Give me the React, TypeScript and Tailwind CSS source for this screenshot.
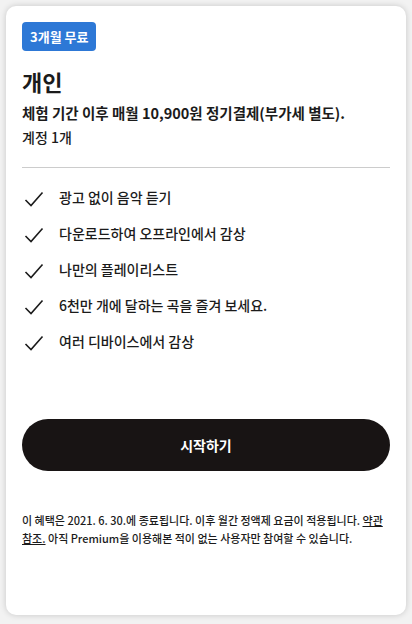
import React from "react";

const features = [
  "광고 없이 음악 듣기",
  "다운로드하여 오프라인에서 감상",
  "나만의 플레이리스트",
  "6천만 개에 달하는 곡을 즐겨 보세요.",
  "여러 디바이스에서 감상",
];

const Check: React.FC = () => (
  <svg width="20" height="21" viewBox="0 0 20 21" fill="none" className="shrink-0">
    <path d="M1.5 13 L7 18.5 L18.5 5.5" stroke="#1b1b1b" strokeWidth="1.6" />
  </svg>
);

const App: React.FC = () => {
  return (
    <div
      className="min-h-[624px] w-[412px] bg-[#f2f2f2] p-[6px] text-[#1b1b1b]"
      style={{ fontFamily: '"Noto Sans CJK KR", "Noto Sans", sans-serif' }}
    >
      <div className="flex h-[609px] flex-col rounded-[10px] bg-white px-4 pt-4 shadow-[0_0_6px_rgba(0,0,0,0.18)]">
        <div className="self-start rounded-[4px] bg-[#2d78d6] px-2 py-[5px] text-[13px] font-bold leading-[19px] text-white">
          3개월 무료
        </div>
        <h2 className="mt-[15px] text-[22px] font-bold leading-[30px]">개인</h2>
        <p className="mt-[6px] text-[14.5px] font-semibold leading-[22px]">
          체험 기간 이후 매월 10,900원 정기결제(부가세 별도).
        </p>
        <p className="mt-[2px] text-[14px] font-medium leading-[22px]">계정 1개</p>
        <div className="mt-[19px] h-px bg-[#cccccc]" />
        <ul className="mt-[19px] flex flex-col gap-[15px]">
          {features.map((f) => (
            <li key={f} className="flex h-[21px] items-center gap-[15px] pl-[2px]">
              <Check />
              <span className="text-[14px] font-medium leading-[21px]">{f}</span>
            </li>
          ))}
        </ul>
        <button className="mt-[67px] h-[52px] w-full shrink-0 rounded-full bg-[#181414] text-[14px] font-bold text-white">
          시작하기
        </button>
        <p className="mt-[40px] text-[11px] font-medium leading-[18px] text-[#1b1b1b]">
          이 혜택은 2021. 6. 30.에 종료됩니다. 이후 월간 정액제 요금이 적용됩니다.{" "}
          <span className="underline">약관 참조.</span> 아직 Premium을 이용해본 적이 없는 사용자만 참여할 수 있습니다.
        </p>
      </div>
    </div>
  );
};

export default App;
